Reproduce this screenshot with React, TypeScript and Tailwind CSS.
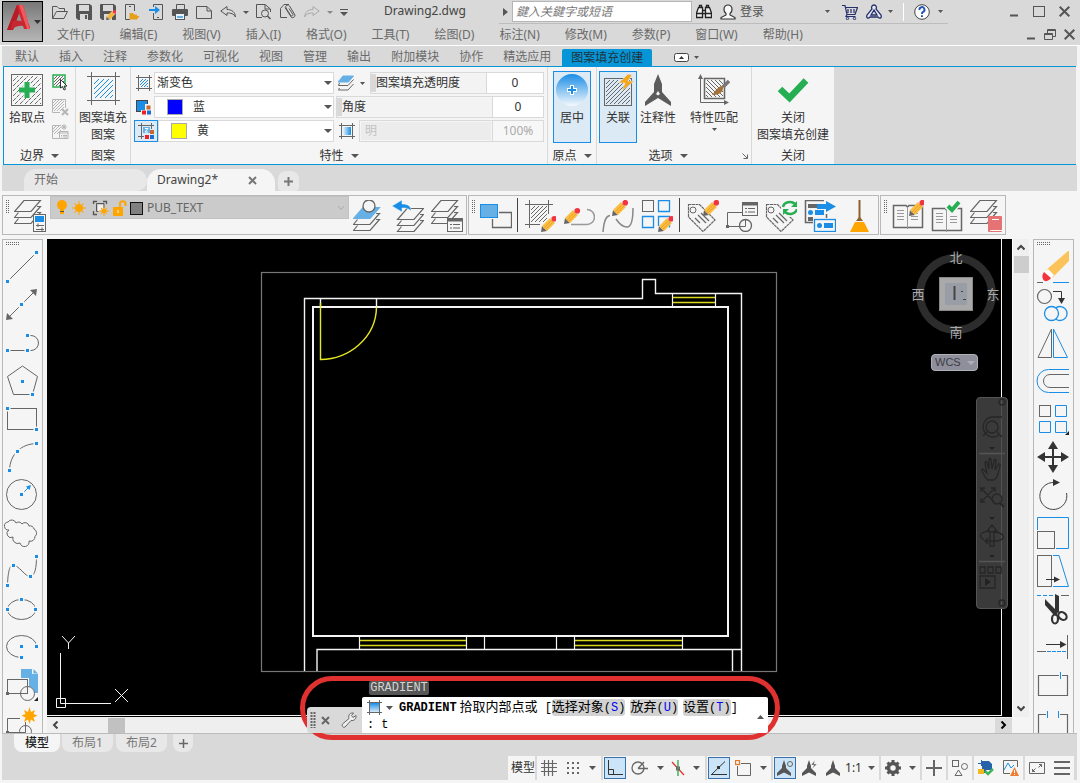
import React from "react";
import type { ReactNode } from "react";

const GRAY = "#666666";
const BLUE = "#1a8ee6";
const SKY = "#67b0e6";

type P = { children?: ReactNode };

function Ico({ w = 16, h = 16, children }: P & { w?: number; h?: number }) {
  return (
    <svg width={w} height={h} viewBox={`0 0 ${w} ${h}`} fill="none" stroke={GRAY} className="shrink-0" aria-hidden="true">
      {children}
    </svg>
  );
}

function Btn({ label, className = "", children }: P & { label: string; className?: string }) {
  return (
    <button type="button" aria-label={label} title={label} className={`flex shrink-0 items-center justify-center ${className}`}>
      {children}
    </button>
  );
}

function Caret({ w = 8, h = 4, color = "#555" }: { w?: number; h?: number; color?: string }) {
  return (
    <Ico w={w} h={h}>
      <path d={`M0 0H${w}L${w / 2} ${h}Z`} fill={color} stroke="none" />
    </Ico>
  );
}

function Hatch({ x, y, s, step = 4, color = GRAY, dash, w = 1, back = false }: { x: number; y: number; s: number; step?: number; color?: string; dash?: string; w?: number; back?: boolean }) {
  const parts: string[] = [];
  for (let k = step; k < 2 * s; k += step) {
    const a = [Math.max(0, k - s), Math.min(k, s)];
    const b = [Math.min(k, s), Math.max(0, k - s)];
    const f = (v: number) => (back ? s - v : v);
    parts.push(`M${x + f(a[0])} ${y + a[1]}L${x + f(b[0])} ${y + b[1]}`);
  }
  return <path d={parts.join("")} stroke={color} strokeDasharray={dash} strokeWidth={w} />;
}

function Dot({ x, y }: { x: number; y: number }) {
  return (
    <>
      <rect x={x - 3} y={y - 3} width={6} height={6} fill="#f5f5f5" stroke="none" />
      <rect x={x - 1.5} y={y - 1.5} width={3} height={3} fill={BLUE} stroke="none" />
    </>
  );
}

function Pencil({ x, y }: { x: number; y: number }) {
  return (
    <g transform={`translate(${x} ${y})`} stroke="none">
      <path d="M0 16L1 10L6 15Z" fill="#666" />
      <path d="M1 10L9 2L14 7L6 15Z" fill="#fbbe45" />
      <path d="M2.800 12.200L11 4M4.500 13.500L12.500 5.500" stroke="#f0a020" />
      <path d="M9 2L10.500 .8L15.200 5.500L14 7Z" fill="#e5e5e5" />
      <circle cx={13.3} cy={2.700} r={2.800} fill="#f5333f" />
    </g>
  );
}

function Layers({ x = 0, y = 0, top = "none" }: { x?: number; y?: number; top?: string }) {
  return (
    <g transform={`translate(${x} ${y})`} strokeWidth={1.2}>
      <path d="M10 .5H26.5L17 11.5H.5Z" fill={top} stroke={top === "none" ? GRAY : top} />
      <path d="M4.500 12.500L.5 17.500H17L26.500 6.500H23M4.500 18.500L.5 23.500H17L26.500 12.500H23" />
    </g>
  );
}

function Grip({ vertical = false }: { vertical?: boolean }) {
  return vertical ? (
    <Ico w={5} h={14}>
      <path d="M1.500 0V14M3.500 0V14" strokeDasharray="1 1" />
    </Ico>
  ) : (
    <Ico w={14} h={4}>
      <path d="M0 .5H14M0 2.500H14" strokeDasharray="1 1" />
    </Ico>
  );
}

/* ---------- title bar ---------- */

const floppy = (
  <>
    <path d="M.5 .5H14L15.500 2V15.500H2L.5 14Z" fill="#555" stroke="#555" />
    <rect x={3} y={1} width={10} height={6} fill="#d9d9d9" stroke="none" />
    <rect x={4} y={10} width={8} height={6} fill="#d9d9d9" stroke="none" />
    <rect x={9} y={11} width={2} height={4} fill="#555" stroke="none" />
  </>
);

const quick: [string, ReactNode][] = [
  ["打开", <Ico><path d="M.5 14.500V2.500H5L7 4.500H12.500V7M.5 14.500L4.500 7.500H15.500L12 14.500Z" stroke="#555" /></Ico>],
  ["保存", <Ico>{floppy}</Ico>],
  ["另存为", <Ico>{floppy}<g transform="translate(6 6) scale(.64)"><Pencil x={0} y={0} /></g></Ico>],
  ["从移动端打开", <Ico><path d="M6 15.500H1.500V.5H10.500V7M5 2.500H7" stroke="#555" /><path d="M5.500 15V9H9L10 10.500H13V12H15.500L13 15.500H5.500Z" fill="#e8a01c" stroke="none" /></Ico>],
  ["保存到移动端", <Ico><path d="M5.500 3V.5H14.500V15.500H5.500V9M9 13.500H11" stroke="#555" fill="none" /><path d="M1 5H7V2L12 6L7 10V7H1Z" fill="#1a8ee6" stroke="none" /></Ico>],
  ["打印", <Ico><path d="M4.500 5V.5H12.500V5" stroke="#555" /><rect x={0} y={5} width={16} height={7} rx={1} fill="#555" stroke="none" /><rect x={3.500} y={9.500} width={9} height={6} fill="#e8f3fb" stroke="#555" /><path d="M5 12H11V14H5Z" fill={SKY} stroke="none" /></Ico>],
  ["新建", <Ico><path d="M.5 2.500H11L15.500 7V14.500H.5ZM11 2.500V7H15.500" stroke="#555" /></Ico>],
  ["放弃", <Ico><path d="M.8 7L7 2.500V5.500C12 5.500 15 8 15.500 13C13.500 9.500 11 9 7 9V11.500Z" stroke="#555" /></Ico>],
];

const menus = ["文件(F)", "编辑(E)", "视图(V)", "插入(I)", "格式(O)", "工具(T)", "绘图(D)", "标注(N)", "修改(M)", "参数(P)", "窗口(W)", "帮助(H)"];

function Header() {
  return (
    <header className="flex h-[46px] shrink-0 border-b border-white bg-[#d9d9d9]">
      <button type="button" aria-label="应用程序" className="mt-[1px] ml-[2px] h-[41px] w-[41px] shrink-0 border border-black bg-gradient-to-b from-[#777] via-[#999] to-[#b5b5b5]">
        <Ico w={39} h={39}>
          <g stroke="none">
            <path d="M4 28L14 3H20L27 27H21L16 11L10 28Z" fill="#d3262f" />
            <path d="M4 28L14 3L16 11L10 28Z" fill="#b81c26" />
            <path d="M9 20C14 17 19 19 26 22L27 27C20 22 14 23 8 28Z" fill="#c42831" />
            <path d="M16 3H20L27 27L24 27Z" fill="#ee5a5f" />
            <path d="M31 18H38L34.500 22Z" fill="#333" />
          </g>
        </Ico>
      </button>
      <div className="min-w-0 flex-1">
        <div className="flex h-[24px]">
          <div className="flex h-[24px] items-center pl-[5px]">
            {quick.map(([l, i]) => (
              <Btn key={l} label={l} className="w-6">{i}</Btn>
            ))}
            <Btn label="放弃列表" className="w-3"><Caret w={6} h={3} /></Btn>
            <Btn label="打印预览" className="w-6">
              <Ico><path d="M6 13.500H.5V.5H9L14.500 5V8M9 .5V5H14" stroke="#555" /><circle cx={9} cy={9.500} r={3.500} stroke="#555" /><path d="M11.500 12L14.500 15" stroke="#555" strokeWidth={1.500} /></Ico>
            </Btn>
            <Btn label="附着" className="w-6">
              <Ico><path d="M7 13.500H.5V4.500L4 .5H9" stroke="#555" /><path d="M5 3.500L11.500 13.500A2.500 2.500 0 0 0 15 11L9.500 2A2 2 0 0 0 6 4L11 12A1.500 1.500 0 0 0 13 10.500L9 4.500" stroke="#555" /></Ico>
            </Btn>
            <Btn label="重做" className="w-6">
              <Ico><path d="M15.200 7L9 2.500V5.500C4 5.500 1 8 .5 13C2.500 9.500 5 9 9 9V11.500Z" stroke="#aaa" /></Ico>
            </Btn>
            <Btn label="重做列表" className="w-3"><Caret w={6} h={3} color="#888" /></Btn>
            <Btn label="自定义" className="w-4">
              <Ico w={8} h={7}><path d="M0 .5H8" stroke="#555" /><path d="M0 3H8L4 7Z" fill="#555" stroke="none" /></Ico>
            </Btn>
          </div>
          <h1 className="ml-[32px] w-[115px] pt-[2px] text-[12px] leading-[18px] text-[#444]">Drawing2.dwg</h1>
          <div className="flex h-[24px] items-center border-b border-[#bdbdbd]">
            <Btn label="展开搜索" className="w-[13px]"><Ico w={5} h={8}><path d="M0 0L5 4L0 8Z" fill="#555" stroke="none" /></Ico></Btn>
            <input aria-label="搜索" placeholder="鍵入关鍵字或短语" className="h-[21px] w-[180px] border border-[#b5b5b5] bg-white px-[3px] text-[12px] text-[#555] italic placeholder:text-[#777]" />
            <Btn label="查找" className="w-6">
              <Ico><path d="M2.500 3.500H6.500V13.500H.5V9ZM13.500 3.500H9.500V13.500H15.500V9ZM6.500 6.500H9.500V9.500H6.500M3.500 3.500V1.500H5.500V3.500M10.500 3.500V1.500H12.500V3.500M.5 9.500H6.500M9.500 9.500H15.500" stroke="#222" strokeWidth={1.300} fill="#eee" /></Ico>
            </Btn>
            <Btn label="登录" className="h-5 gap-1 pl-1 text-[12px] text-[#555]">
              <Ico><path d="M6 9.500V11L1 13.500V15H15V13.500L10 11V9.500A5 5 0 0 0 12 5A4 4 0 0 0 4 5A5 5 0 0 0 6 9.500Z" fill="#f8f8f8" stroke="#333" strokeWidth={1.200} /></Ico>
              登录
            </Btn>
            <Btn label="登录选项" className="ml-[59px] w-2"><Caret w={5} h={3} /></Btn>
            <Btn label="应用商店" className="ml-[9px] w-5">
              <Ico><path d="M0 1.500H3L5 10.500H13L15.500 3.500H4M5 10.500L4 12.500H13.500M6 5V9M9 5V9M12 5V9" stroke="#25306a" strokeWidth={1.200} /><circle cx={5.500} cy={14.500} r={1.200} stroke="#25306a" /><circle cx={12.500} cy={14.500} r={1.200} stroke="#25306a" /></Ico>
            </Btn>
            <Btn label="Autodesk" className="ml-1 w-5">
              <Ico><path d="M8 1C10 1 11 3 10 5L15 11C16 14 14 15 12 13H4C2 15 0 14 1 11L6 5C5 3 6 1 8 1ZM8 6L5 11H11Z" fill="#e4e9f5" stroke="#25306a" strokeWidth={1.300} /></Ico>
            </Btn>
            <Btn label="Autodesk 选项" className="w-3"><Caret w={5} h={3} /></Btn>
            <span className="ml-[7px] h-[18px] w-px bg-white" />
            <Btn label="帮助" className="ml-[8px] w-5">
              <Ico><circle cx={8} cy={8} r={7.300} fill="#fff" stroke="#444" /><path d="M5.500 6A2.500 2.500 0 1 1 8.800 8C8 8.500 8 9 8 10M8 11.300V13" stroke="#2454b8" strokeWidth={2} /></Ico>
            </Btn>
            <Btn label="帮助选项" className="w-4"><Caret w={5} h={3} /></Btn>
          </div>
          <div className="ml-auto flex h-[22px] items-center gap-[14px] pr-[10px]">
            <Btn label="最小化"><Ico w={9} h={11}><path d="M0 9.500H8" strokeWidth={2} stroke="#555" /></Ico></Btn>
            <Btn label="最大化"><Ico w={12} h={11}><rect x={.5} y={.5} width={11} height={10} stroke="#555" /></Ico></Btn>
            <Btn label="关闭"><Ico w={11} h={11}><path d="M.7 .7L10.300 10.300M10.300 .7L.7 10.300" strokeWidth={2} stroke="#555" /></Ico></Btn>
          </div>
        </div>
        <nav className="flex h-[21px] items-center gap-[25px] pr-[5px] pl-[14px] text-[12px] text-[#6a6a6a]">
          {menus.map((m) => (
            <button key={m} type="button" className="whitespace-nowrap">{m}</button>
          ))}
          <div className="ml-auto flex items-center gap-2">
            <Btn label="最小化文档"><Ico w={9} h={11}><path d="M0 9.500H8" strokeWidth={2} stroke="#555" /></Ico></Btn>
            <Btn label="还原文档"><Ico w={12} h={11}><path d="M3.500 4V.5H11.500V7.500H9M.5 4.500H8.500V10.500H.5ZM.5 5.500H8.500M3.500 1.500H11.500" stroke="#555" /></Ico></Btn>
            <Btn label="关闭文档"><Ico w={11} h={11}><path d="M.7 .7L10.300 10.300M10.300 .7L.7 10.300" strokeWidth={2} stroke="#555" /></Ico></Btn>
          </div>
        </nav>
      </div>
    </header>
  );
}

/* ---------- ribbon ---------- */

function Panel({ title, caret, launcher, width, children }: P & { title: string; caret?: boolean; launcher?: boolean; width: string }) {
  return (
    <section className={`flex flex-col border-r border-[#d9d9d9] bg-[#f5f5f5] text-[12px] text-[#333] ${width}`}>
      <div className="flex min-h-0 flex-1">{children}</div>
      <div className="flex h-[17px] items-center">
        <h2 className="flex flex-1 items-center justify-center gap-[7px] text-[12px] leading-[17px]">
          {title}
          {caret && <Caret />}
        </h2>
        {launcher && (
          <Btn label="选项设置" className="w-[12px]">
            <Ico w={6} h={6}><path d="M.5 .5L5 5M5.500 1.500V5.500H1.500" /></Ico>
          </Btn>
        )}
      </div>
    </section>
  );
}

function Frame({ s, children }: P & { s: number }) {
  const a = Math.round(s / 8) + 0.5;
  const b = s - a;
  return (
    <Ico w={s} h={s}>
      <path d={`M${a} 0V${s}M${b} 0V${s}M0 ${a}H${s}M0 ${b}H${s}`} />
      {children}
    </Ico>
  );
}

function Combo({ label, value, color }: { label: string; value: string; color?: string }) {
  return (
    <div className="relative h-[22px] min-w-0 flex-1 border border-[#d9d9d9] bg-white">
      <select aria-label={label} className={`h-full w-full appearance-none bg-transparent text-[12px] leading-[20px] outline-none ${color ? "pl-[38px]" : "pl-[2px]"}`}>
        <option>{value}</option>
      </select>
      {color && (
        <svg className="absolute top-[2px] left-[12px]" width={16} height={16} aria-hidden="true">
          <rect x={.5} y={.5} width={15} height={15} fill={color} stroke="#aaa" />
        </svg>
      )}
      <span className="pointer-events-none absolute top-[8px] right-[1px]"><Caret /></span>
    </div>
  );
}

function Value({ id, label, value, off }: { id: string; label: string; value: string; off?: boolean }) {
  return (
    <div className={`flex h-[22px] min-w-0 flex-1 border border-[#d9d9d9] ${off ? "text-[#aaa]" : ""}`}>
      <label htmlFor={id} className={`flex min-w-0 flex-1 items-center border-[#d9d9d9] whitespace-nowrap ${off ? "m-px bg-[#ececec] pl-[4px] text-[#c2c2c2]" : "my-px border-l-[5px] bg-[#f3f3f3]"}`}>{label}</label>
      <input id={id} defaultValue={value} disabled={off} className={`border-l border-[#d9d9d9] text-center text-[12px] outline-none ${off ? "w-[51px] bg-[#f7f7f7]" : id === "transparency" ? "w-[57px] bg-white" : "w-[51px] bg-white"}`} />
    </div>
  );
}

const bluesq = (
  <>
    <rect x={1.500} y={1.500} width={11} height={11} fill="#1a8ee6" stroke="#444" />
    <path d="M10 5H16V9H14V16H6V11H10Z" fill="#f5f5f5" stroke="none" />
    <rect x={11.500} y={6.500} width={4} height={4} fill="#c8682c" stroke="none" />
    <rect x={7} y={11.500} width={4} height={4} fill="#e22" stroke="none" />
    <rect x={12} y={11.500} width={4} height={4} fill="#1a6fd0" stroke="none" />
  </>
);

const tabs = ["默认", "插入", "注释", "参数化", "可视化", "视图", "管理", "输出", "附加模块", "协作", "精选应用"];

function Ribbon() {
  return (
    <>
      <nav className="flex h-[20px] shrink-0 items-end bg-[#d9d9d9] pl-[3px] text-[12px] text-[#6a6a6a]">
        {tabs.map((t) => (
          <button key={t} type="button" className="h-[18px] px-[10px] leading-[18px] whitespace-nowrap">{t}</button>
        ))}
        <button type="button" className="ml-px h-[17px] rounded-t-[2px] bg-[#0696d7] px-[9px] leading-[17px] text-[#1f3440]">图案填充创建</button>
        <Btn label="功能区显示" className="ml-[22px] h-[17px] gap-[5px]">
          <Ico w={15} h={9}><rect x={.5} y={.5} width={14} height={8} rx={2} fill="#fff" stroke="#444" /><path d="M5 6L7.500 3L10 6Z" fill="#333" stroke="none" /></Ico>
          <Caret w={5} h={3} />
        </Btn>
      </nav>
      <div className="mr-px ml-px flex h-[99px] shrink-0 border-y border-l border-[#0696d7] bg-[#d9d9d9]">
        <Panel title="边界" caret width="w-[72px]">
          <Btn label="拾取点" className="ml-[3px] w-[40px] flex-col justify-start gap-[3px] self-start pt-[7px]">
            <Ico w={32} h={32}>
              <rect x={.5} y={.5} width={31} height={31} />
              <Hatch x={2} y={2} s={28} step={5} dash="4 1" />
              <path d="M16 8V24M8 16H24" stroke="#f5f5f5" strokeWidth={7} />
              <path d="M16 8V24M8 16H24" stroke="#25ae52" strokeWidth={5} />
            </Ico>
            <span className="whitespace-nowrap">拾取点</span>
          </Btn>
          <div className="ml-[5px] flex flex-col gap-2 pt-[7px]">
            <Btn label="选择"><Ico w={17} h={17}><rect x={1} y={1} width={12} height={12} stroke="#25ae52" strokeWidth={1.500} /><Hatch x={2} y={2} s={10} step={3} /><path d="M8.500 5.500V14L10.500 12.500L12 16L13.500 15.300L12 12H15Z" fill="#fff" stroke="#333" /></Ico></Btn>
            <Btn label="删除"><Ico w={17} h={17}><path d="M8 13.500H.5V.5H13.500V9" stroke="#b5b5b5" /><Hatch x={1} y={1} s={11} step={3} color="#b5b5b5" /><path d="M10 10L16 16M16 10L10 16" stroke="#b5b5b5" strokeWidth={2} /></Ico></Btn>
            <Btn label="重新创建"><Ico w={17} h={17}><path d="M7 14.500H.5V1.500H9" stroke="#b5b5b5" /><Hatch x={1} y={2} s={8} step={3} color="#b5b5b5" /><path d="M12 0V6M9 3H15M10 1L14 5M14 1L10 5" stroke="#b5b5b5" /><path d="M7.500 7.500H16V14.500H7.500ZM7.500 9H16M9 11.500H10M11 11.500H15M9 13H10M11 13H15" stroke="#b5b5b5" fill="#f5f5f5" /></Ico></Btn>
          </div>
        </Panel>
        <Panel title="图案" width="w-[55px]">
          <button type="button" className="flex w-full flex-col items-center pt-[5px] leading-[17px] whitespace-nowrap">
            <Frame s={33}><Hatch x={7} y={7} s={19} step={5} color={BLUE} /></Frame>
            <span className="mt-[4px]">图案填充</span>
            <span>图案</span>
          </button>
        </Panel>
        <Panel title="特性" caret width="w-[417px]">
          <div className="flex w-[203px] shrink-0 flex-col gap-[2px] pt-[5px] pl-[3px]">
            <div className="flex items-center gap-px">
              <span className="flex w-[19px] justify-center"><Frame s={16}><Hatch x={4} y={4} s={8} step={3} color={BLUE} /></Frame></span>
              <Combo label="图案类型" value="渐变色" />
            </div>
            <div className="flex items-center gap-px">
              <span className="flex w-[19px] justify-center"><Ico w={17} h={17}>{bluesq}</Ico></span>
              <Combo label="渐变色 1" value="蓝" color="#0000ff" />
            </div>
            <div className="flex items-center">
              <Btn label="启用双色" className="h-[22px] w-[24px] border border-[#1a8ee6] bg-[#dceaf5]">
                <Ico w={17} h={17}><path d="M3.500 0V16M13.500 0V6M0 2.500H16M0 13.500H6" /><rect x={5} y={4} width={7} height={6} fill={SKY} stroke="none" /><path d="M7 5.500H10L7 9H10" stroke="#fff" /><path d="M12 7H16V11H12Z" fill="#c8682c" stroke="none" /><path d="M7 12H11V16H7Z" fill="#e22" stroke="none" /><path d="M12 12H16V16H12Z" fill="#1a6fd0" stroke="none" /></Ico>
              </Btn>
              <Combo label="渐变色 2" value="黄" color="#ffff00" />
            </div>
          </div>
          <div className="flex min-w-0 flex-1 flex-col gap-[2px] pt-[5px] pr-[3px] pl-[2px]">
            <div className="flex items-center">
              <Btn label="图层" className="ml-[2px] gap-[6px] pr-[5px]">
                <Ico w={16} h={16}><path d="M5 1H15.500L10.500 7H0Z" fill={SKY} stroke={SKY} /><path d="M1.500 8L.5 10.500H10L15.500 4.500M1.500 13L.5 15H10L15.500 9" /></Ico>
                <Caret w={5} h={3} />
              </Btn>
              <Value id="transparency" label="图案填充透明度" value="0" />
            </div>
            <div className="flex items-center">
              <Value id="angle" label="角度" value="0" />
            </div>
            <div className="flex items-center">
              <Btn label="居中渐变" className="mr-[4px] ml-[3px]"><Frame s={16}><defs><linearGradient id="cg"><stop stopColor="#e6f2fb" /><stop offset="1" stopColor={BLUE} /></linearGradient></defs><rect x={4} y={4} width={8} height={8} fill="url(#cg)" stroke="none" /></Frame></Btn>
              <Value id="tint" label="明" value="100%" off />
            </div>
          </div>
        </Panel>
        <Panel title="原点" caret width="w-[49px]">
          <button type="button" className="mt-[4px] ml-[5px] flex h-[72px] w-[38px] flex-col items-center gap-[3px] border border-[#1a8ee6] bg-[#dceaf5] pt-[2px]">
            <Ico w={32} h={32}>
              <defs><linearGradient id="og" x2="0" y2="1"><stop stopColor={BLUE} /><stop offset="1" stopColor="#f5f9fd" /></linearGradient></defs>
              <circle cx={16} cy={16} r={16} fill="url(#og)" stroke="none" />
              <path d="M16 11V21M11 16H21" stroke="#fff" strokeWidth={4} /><path d="M16 12V20M12 16H20" stroke={BLUE} strokeWidth={2} />
            </Ico>
            <span>居中</span>
          </button>
        </Panel>
        <Panel title="选项" caret launcher width="w-[155px]">
          <div className="flex flex-1 pl-[2px]">
            <button type="button" className="mt-[4px] flex h-[72px] w-[38px] flex-col items-center gap-[3px] border border-[#1a8ee6] bg-[#dceaf5] pt-[2px]">
              <Ico w={32} h={32}><rect x={2.500} y={4.500} width={27} height={27} /><Hatch x={4} y={6} s={24} step={4} /><path d="M26 0L17 9H23L20 17L32 7H26L30 1Z" fill="#f9a51a" stroke="#dceaf5" strokeWidth={.6} /></Ico>
              <span>关联</span>
            </button>
            <button type="button" className="flex w-[42px] flex-col items-center gap-[3px] self-start pt-[7px] whitespace-nowrap">
              <Ico w={32} h={32}><path d="M16 0L20 10V18L29 28V32L16 24L3 32V28L12 18V10Z" fill="#5c5c5c" stroke="none" /><path d="M14 20L16 17L18 20L16 21.500Z" fill="#f5f5f5" stroke="none" /></Ico>
              <span>注释性</span>
            </button>
            <button type="button" className="flex w-[70px] flex-col items-center self-start pt-[7px] whitespace-nowrap">
              <Ico w={32} h={32}><path d="M2.500 28.500V3M2.500 28.500H28" /><path d="M0 5L2.500 0L5 5ZM26 26L31 28.500L26 31Z" fill={GRAY} stroke="none" /><rect x={6.500} y={4.500} width={20} height={20} strokeWidth={1.500} /><Hatch x={8} y={6} s={17} step={4} back /><path d="M31 7L25 13" stroke="#777" strokeWidth={3.500} /><path d="M25 12C21 11 17 17 14 21C19 21 26 20 25 12Z" fill="#a5713a" stroke="none" /></Ico>
              <span className="mt-[3px]">特性匹配</span>
              <span className="mt-px"><Caret w={5} h={3} /></span>
            </button>
          </div>
        </Panel>
        <Panel title="关闭" width="w-[83px]">
          <button type="button" className="flex w-full flex-col items-center pt-[7px] leading-[17px] whitespace-nowrap">
            <Ico w={32} h={32}><path d="M3 15L12.500 24L29 6.500" stroke="#25ae52" strokeWidth={6.500} /></Ico>
            <span className="mt-[3px]">关闭</span>
            <span>图案填充创建</span>
          </button>
        </Panel>
      </div>
    </>
  );
}

function DocTabs() {
  return (
    <div className="flex h-[26px] shrink-0 items-end bg-[#d9d9d9] pl-[22px] text-[12px]">
      <button type="button" className="h-[22px] w-[123px] rounded-t-[12px] rounded-br-[10px] bg-[#e8e8e8] pl-[10px] text-left text-[#6a6a6a]">开始</button>
      <div className="flex h-[22px] w-[128px] items-center justify-between rounded-t-[14px] bg-[#f5f5f5] pr-[18px] pl-[10px]">
        <button type="button" className="text-[#444]">Drawing2*</button>
        <Btn label="关闭标签"><Ico w={9} h={9}><path d="M1 1L8 8M8 1L1 8" strokeWidth={2} stroke="#777" /></Ico></Btn>
      </div>
      <Btn label="新标签" className="ml-[3px] h-[20px] w-[21px] rounded-t-[8px] rounded-b-[4px] bg-[#e8e8e8]"><Ico w={9} h={9}><path d="M4.500 0V9M0 4.500H9" strokeWidth={2} stroke="#777" /></Ico></Btn>
    </div>
  );
}

/* ---------- toolbars ---------- */

const tag = <path d="M1.500 4.500H12.500L28 20L16 31.500L1.500 17Z" strokeDasharray="3 .5" strokeWidth={1.200} />;
const tagInner = <><circle cx={6} cy={10} r={3} /><path d="M8 18L13 23M11 15L19 23M14 13L22 21" strokeWidth={1.200} /></>;
const sheet = (x: number, y: number, s = 0) => (
  <g transform={`translate(${x} ${y})`}><rect x={.5} y={.5} width={15} height={13 - s} fill="#f5f5f5" /><path d="M0 2H16" strokeWidth={3} /><path d="M3 6.500H5M3 10H5M6 6.500H13M6 10H13" /></g>
);
const book = <><path d="M.5 6.500H13L14.500 8L16 6.500H29.500V28.500H.5Z" strokeWidth={1.500} /><path d="M14.500 8V30M4 11.500H11M4 14.500H11M4 17.500H11M4 20.500H11M18 14.500H25M18 17.500H25M18 20.500H25" stroke="#999" /></>;

const tools2: [string, ReactNode][] = [
  ["编辑图案填充", <><path d="M5.500 0V28M24.500 0V14M1 4.500H29M1 24.500H16" /><Hatch x={7} y={6} s={16} step={4} /><Pencil x={17} y={16} /></>],
  ["编辑多段线", <><path d="M8 24.500H24A7.500 7.500 0 0 0 24 9.500H25" strokeWidth={1.500} stroke="#999" /><Pencil x={1} y={8} /></>],
  ["编辑样条曲线", <><path d="M1 32C2 20 4 16 8 15.500M14 19C18 25 21 27 25 27C29 27 31 20 31 8" strokeWidth={1.500} stroke="#888" /><Pencil x={10} y={0} /></>],
  ["编辑阵列", <><rect x={1.500} y={.5} width={11} height={11} /><path d="M17.500 .5H28.500V11.500H17.500ZM1.500 16.500H12.500V27.500H1.500ZM17.500 26V16.500H28.500V27.500" stroke={BLUE} strokeWidth={1.300} /><Pencil x={17} y={16} /></>],
];
const tools3: [string, ReactNode][] = [
  ["编辑属性", <>{tag}{tagInner}<Pencil x={16} y={0} /></>],
  ["块属性", <>{sheet(16, 2)}<path d="M16 12.500H1.500V26.500H19.500V19" /><rect x={0} y={25} width={3} height={3} fill={GRAY} stroke="none" /><circle cx={19.500} cy={25.500} r={6} strokeWidth={1.300} /></>],
  ["同步属性", <>{tag}{tagInner}<circle cx={25} cy={8} r={9} fill="#f5f5f5" stroke="none" /><path d="M18 7A7 6 0 0 1 30 4M32 9A7 6 0 0 1 20 12" stroke="#25ae52" strokeWidth={2.500} /><path d="M32 1V7H26ZM18 15V9H24Z" fill="#25ae52" stroke="none" /></>],
  ["数据提取", <><path d="M20 .5H1.500V22.500H9M22.500 14V18" strokeWidth={1.500} /><path d="M4 4H13V8H4ZM4 17H9V21H4Z" fill={GRAY} stroke="none" /><path d="M13 4H22V1L32 6.500L22 12V9H13ZM11 10H20V15H11Z" fill={BLUE} stroke="none" /><circle cx={6.500} cy={12.500} r={2.500} fill={BLUE} stroke="none" /><rect x={10.500} y={19.500} width={21} height={12} fill="#f5f5f5" stroke={BLUE} strokeWidth={1.300} /><circle cx={15.500} cy={25.500} r={2.500} fill={BLUE} stroke="none" /><path d="M20 23H29V28H20Z" fill={BLUE} stroke="none" /></>],
  ["清理", <><path d="M16.500 0V19" stroke="#8d6030" strokeWidth={2} /><path d="M13 21L16 17H17L20 21Z" fill="#8d6030" stroke="none" /><path d="M12 22H21L26 32H7Z" fill="#ffa500" stroke="none" /></>],
];

function ToolCells({ items }: { items: [string, ReactNode][] }) {
  return (
    <>
      {items.map(([l, i]) => (
        <Btn key={l} label={l} className="h-[36px] w-[39px]"><Ico w={32} h={32}>{i}</Ico></Btn>
      ))}
    </>
  );
}

function TopToolbars() {
  const box = "flex h-[40px] border border-[#b9b9b9] pt-[2px]";
  return (
    <div className="flex h-[48px] shrink-0 gap-px pt-[4px]">
      <div className={`${box} w-[465px]`}>
        <span className="pt-[2px] pl-[2px]"><Grip vertical /></span>
        <Btn label="图层特性" className="mr-[2px] ml-px h-[36px] w-[37px]">
          <Ico w={32} h={32}><Layers y={0} /><rect x={19.500} y={14.500} width={12} height={17} fill="#f5f5f5" /><rect x={21} y={16} width={9} height={6} fill={BLUE} stroke="none" /><path d="M22 25.500H30M22 29.500H30M24 23.500V27M28 27.500V31" /></Ico>
        </Btn>
        <div className="relative -mt-[2px] h-[23px] min-w-0 flex-1 border border-[#c2c2c2] bg-[#cbcbcb]">
          <select aria-label="图层" className="block h-[21px] w-full appearance-none bg-transparent pl-[96px] text-[12px] leading-[21px] text-[#666] outline-none"><option>PUB_TEXT</option></select>
          <svg className="pointer-events-none absolute top-[2px] left-[5px]" width={90} height={18} fill="none" aria-hidden="true">
            <circle cx={6} cy={6} r={5} fill="#ffa500" /><path d="M4 10H8V15H4Z" fill="#ffa500" /><path d="M4 12.500H8" stroke="#555" />
            <circle cx={23} cy={9} r={4} fill="#ffa500" /><path d="M23 2V16M16 9H30M18 4L28 14M28 4L18 14" stroke="#ffa500" />
            <path d="M37.500 5V2.500H41M47 2.500H50.500V5M37.500 12V15.500H41" stroke="#555" strokeWidth={1.300} /><path d="M40.500 4.500H48V9M40.500 4.500V12.500H43" stroke="#555" /><path d="M42 6H47V9L43 12.500H42Z" fill="#f0f0f0" /><circle cx={48} cy={12} r={2.500} fill="#ffa500" /><path d="M48 7V17M43 12H53M45 9L51 15M51 9L45 15" stroke="#ffa500" />
            <rect x={57} y={8} width={10} height={9} fill="#ffa500" /><path d="M64 8V4A3 3 0 0 1 69.500 4V7" stroke="#ffa500" strokeWidth={2} /><path d="M62 11V14" stroke="#fff" />
            <rect x={74.500} y={3.500} width={12} height={12} fill="#808080" stroke="#111" />
          </svg>
          <svg className="pointer-events-none absolute top-[8px] right-[3px]" width={8} height={6} fill="none" aria-hidden="true"><path d="M1 1L4 4.500L7 1" stroke="#aaa" /></svg>
        </div>
        <div className="flex w-[117px] items-start">
          <Btn label="置为当前" className="h-[36px] w-[39px]"><Ico w={32} h={32}><Layers x={0} y={7} top={SKY} /><circle cx={16} cy={6} r={6} fill="#f5f5f5" strokeWidth={1.300} /></Ico></Btn>
          <Btn label="上一个图层" className="h-[36px] w-[39px]"><Ico w={32} h={32}><Layers x={5} y={8} /><path d="M0 6L10 0V4C16 4 19 6 19 11C16 8 14 8 10 8V12Z" fill={BLUE} stroke="#f5f5f5" strokeWidth={.5} /></Ico></Btn>
          <Btn label="图层状态" className="h-[36px] w-[39px]"><Ico w={32} h={32}><Layers />{sheet(16, 18)}</Ico></Btn>
        </div>
      </div>
      <div className={`${box} w-[411px]`}>
        <span className="pt-[2px] pl-[2px]"><Grip vertical /></span>
        <Btn label="绘图次序" className="h-[36px] w-[39px]"><Ico w={32} h={32}><path d="M12.500 19V27.500H31.500V12.500H19" strokeWidth={1.300} /><rect x={.5} y={4.500} width={17} height={13} fill={SKY} stroke={BLUE} /></Ico></Btn>
        <span className="mx-[2px] h-[34px] w-px bg-[#444]" />
        <ToolCells items={tools2} />
        <span className="mx-[3px] h-[34px] w-px bg-[#444]" />
        <ToolCells items={tools3} />
      </div>
      <div className={`${box} w-[126px]`}>
        <span className="pt-[2px] pl-[2px]"><Grip vertical /></span>
        <ToolCells
          items={[
            ["块编辑器", <><g transform="translate(1 -1)">{book}</g><Pencil x={17} y={0} /></>],
            ["检查标准", <><g transform="translate(1 2)">{book}</g><path d="M16 6L21 11L29 1" stroke="#f5f5f5" strokeWidth={6} /><path d="M17 6L21 10L28 2" stroke="#25ae52" strokeWidth={4} /></>],
            ["图层转换", <><Layers /><rect x={18} y={16} width={14} height={16} rx={1} fill="#e57373" stroke="none" /><path d="M20 30.500H32M22 19.500H29" stroke="#fff" /></>],
          ]}
        />
      </div>
    </div>
  );
}

const draw: [string, ReactNode][] = [
  ["直线", <><path d="M4.500 33.500L33.500 4.500" /><Dot x={4.500} y={33.500} /><Dot x={33.500} y={4.500} /></>],
  ["构造线", <><path d="M6 31L31 6" /><path d="M3 34L4 27L10 33ZM34 3L27 4L33 10Z" fill={GRAY} stroke="none" /><Dot x={18.500} y={18.500} /></>],
  ["多段线", <><path d="M4.500 26.500H24.500M24.500 11.500H28A7.500 7.500 0 0 1 28 26.500H24.500" /><Dot x={4.500} y={26.500} /><Dot x={24.500} y={26.500} /><Dot x={24.500} y={11.500} /></>],
  ["多边形", <><path d="M19.500 4L34.500 14.500L29.500 32.500H10.500L4.500 14.500Z" /><Dot x={19.500} y={19.500} /><Dot x={29.500} y={32.500} /></>],
  ["矩形", <><rect x={4.500} y={8.500} width={29} height={21} /><Dot x={4.500} y={8.500} /><Dot x={33.500} y={29.500} /></>],
  ["圆弧", <><path d="M6.500 32.500C7 16 18 6 33.500 5.500" /><Dot x={6.500} y={32.500} /><Dot x={14.500} y={13.500} /><Dot x={33.500} y={5.500} /></>],
  ["圆", <><circle cx={18.500} cy={18.500} r={15} /><path d="M18.500 18.500L26 11" stroke={BLUE} /><path d="M28 9L23 10.500L26.500 14Z" fill={BLUE} stroke="none" /><Dot x={18.500} y={18.500} /></>],
  ["修订云线", <path d="M6 16A4 4 0 0 1 5 8A4.500 4.500 0 0 1 13 9A4 4 0 0 1 19 10A4 4 0 0 1 26 12A4 4 0 0 1 31 15A4.500 4.500 0 0 1 32 22.500A4.500 4.500 0 0 1 26 27A4.500 4.500 0 0 1 17 29A5 5 0 0 1 10 23A4 4 0 0 1 6 16Z" />],
  ["样条曲线", <><path d="M4.500 33.500C5 15 8 13 10.500 13.500C16 13 22 25 27.500 24.500C32 24 33.500 15 33.500 4.500" /><Dot x={4.500} y={33.500} /><Dot x={10.500} y={13.500} /><Dot x={27.500} y={24.500} /><Dot x={33.500} y={4.500} /></>],
  ["椭圆", <><ellipse cx={18.500} cy={19.500} rx={14} ry={10} /><Dot x={4.500} y={19.500} /><Dot x={18.500} y={9.500} /><Dot x={32.500} y={19.500} /></>],
  ["椭圆弧", <><path d="M18.500 29.500A15 11 0 1 1 33.500 18.500" /><Dot x={18.500} y={18.500} /><Dot x={33.500} y={18.500} /><Dot x={18.500} y={29.500} /></>],
  ["插入块", <><path d="M18 3H29V8H35V27H31.500A7 7 0 0 0 26 20.500V12H18Z" fill={SKY} stroke="none" /><path d="M30.500 3L35 7.500H30.500Z" fill={SKY} stroke="none" /><rect x={4.500} y={13.500} width={20} height={14} /><rect x={3} y={26} width={3} height={3} fill={GRAY} stroke="none" /><circle cx={24.500} cy={27.500} r={7} /><path d="M35 31V35H31Z" fill="#222" stroke="none" /></>],
  ["创建块", <><path d="M17 14.500H4.500V28.500H22.500V18" /><circle cx={22.500} cy={27.500} r={6} /><rect x={3} y={27} width={3} height={3} fill={GRAY} stroke="none" /><path d="M26.500 3L28 8L32 6L30.500 10L34.500 11.500L30.500 13.500L32 18L28 15.500L26.500 20L25 15.500L21 18L22.500 13.500L18.500 11.500L22.500 10L21 6L25 8Z" fill="#ffa500" stroke="none" /></>],
];

const modify: [string, ReactNode][] = [
  ["删除", <><path d="M35 3V13L18 30L11 23L34 3Z" fill="#fcc35a" stroke="none" /><path d="M14 21L20 27L17 31L10 24Z" fill="#fff" stroke="none" /><path d="M10 24L17 30C14 34 10 34 9 31C8 29 8 27 10 24Z" fill="#f5333f" stroke="none" /><path d="M3 34.500H9" /><path d="M19 34.500H35" stroke={BLUE} /></>],
  ["复制", <><circle cx={10.500} cy={10.500} r={7} strokeWidth={1.200} /><path d="M19 5.500H27.500V13" stroke="#333" /><path d="M24 12H31L27.500 18Z" fill="#333" stroke="none" /><path d="M22 21.800A7 7 0 1 1 22 33.200" stroke={BLUE} strokeWidth={1.300} /><circle cx={17.500} cy={27.500} r={7} stroke={BLUE} strokeWidth={1.300} /></>],
  ["镜像", <><path d="M17.500 5V33.500H4Z" /><path d="M19.500 5V33.500H33.500Z" stroke={BLUE} /></>],
  ["偏移", <><path d="M35 7.500H14.500A11.500 11.500 0 0 0 14.500 30.500H35" stroke={BLUE} /><path d="M35 12.500H16A6.500 6.500 0 0 0 16 25.500H35" /></>],
  ["阵列", <><rect x={5.500} y={5.500} width={11} height={11} /><path d="M21.500 5.500H32.500V16.500H21.500ZM5.500 21.500H16.500V32.500H5.500ZM21.500 21.500H32.500V32.500H21.500Z" stroke={BLUE} /><path d="M35 31V35H31Z" fill="#222" stroke="none" /></>],
  ["移动", <><path d="M19 8V30M8 19H30" stroke="#333" strokeWidth={2} /><path d="M19 3L24 11H14ZM19 35L24 27H14ZM3 19L11 14V24ZM35 19L27 14V24Z" fill="#333" stroke="none" /></>],
  ["旋转", <><path d="M20 6.500A13.500 13.500 0 1 0 32.500 17" stroke="#444" /><path d="M19 3L26 6.500L19 10Z" fill="#333" stroke="none" /></>],
  ["缩放", <><path d="M3.500 16V3.500H34.500V34.500H22" stroke={BLUE} /><rect x={3.500} y={17.500} width={17} height={17} /></>],
  ["拉伸", <><rect x={3.500} y={3.500} width={14} height={31} /><path d="M19 3.500H25L34.500 34.500H19" stroke={BLUE} /><path d="M12 27.500H22" stroke="#333" /><path d="M20 24.500L26 27.500L20 30.500Z" fill="#333" stroke="none" /></>],
  ["修剪", <><path d="M3 5.500H19" stroke={BLUE} strokeDasharray="4 2" /><path d="M27 5.500H35" /><path d="M21 4L25 6V22L21 24ZM11 9L24 22L22 26L19 24L11 15Z" fill="#333" stroke="none" /><ellipse cx={21} cy={29} rx={3} ry={4.500} stroke="#333" strokeWidth={2.200} /><ellipse cx={28.500} cy={26} rx={4.500} ry={3.500} transform="rotate(40 28.500 26)" stroke="#333" strokeWidth={2.200} /></>],
  ["延伸", <><path d="M12 16.500H28" stroke="#333" /><path d="M26 13L32.500 16.500L26 20Z" fill="#333" stroke="none" /><path d="M3 23.500H12M33.500 7V31" /><path d="M13 23.500H32" stroke={BLUE} strokeDasharray="4 1" /></>],
  ["打断于点", <><path d="M25 9.500H4.500V29.500H33.500V9.500H28" strokeWidth={1.200} /><path d="M26.500 6V13" stroke={BLUE} /></>],
  ["打断", <><path d="M12 10.500H4.500V33M26 10.500H33.500V33" strokeWidth={1.200} /><path d="M13.500 7V14M24.500 7V14" stroke={BLUE} /></>],
];

function SideBar({ items }: { items: [string, ReactNode][] }) {
  return (
    <div className="flex w-[41px] shrink-0 flex-col items-start overflow-hidden border-x border-t border-[#b9b9b9] bg-[#f5f5f5]">
      <span className="flex h-[8px] shrink-0 items-start pt-[2px] pl-[3px]"><Grip /></span>
      {items.map(([l, i]) => (
        <Btn key={l} label={l} className="h-[38px] w-[38px]"><Ico w={38} h={38}>{i}</Ico></Btn>
      ))}
    </div>
  );
}

/* ---------- drawing area ---------- */

function Drawing() {
  return (
    <svg viewBox="47 239 965 477" width={965} height={477} className="block shrink-0 font-['Noto_Sans_CJK_SC',sans-serif]" fill="none" stroke="#f4f4f4" role="img" aria-label="Drawing2">
      <rect x={261.500} y={272.500} width={515} height={399} stroke="#777" strokeWidth={1.200} />
      <path d="M304.500 671V298.500H642.500V279.500H655.500V293.500H741.500V671M317 671V649.500H741.500M732.500 649V671M320.500 298V307M376.500 298V307" strokeWidth={1.400} />
      <path d="M313 307H728V636H313Z" strokeWidth={2} />
      <path d="M359.500 636V649M466.500 636V649M484.500 636V649M556.500 636V649M574.500 636V649M682.500 636V649M672.500 294V307M715.500 294V307" strokeWidth={1.200} />
      <path d="M360 640.500H466M360 645.500H466M575 640.500H682M575 645.500H682M673 297.500H715M673 302.500H715" stroke="#d8d81a" strokeWidth={1.500} />
      <path d="M320.500 303V359.500C349 359 376 338 376.500 307" stroke="#e8e820" strokeWidth={1.400} />
      <path d="M1001.500 239V716M47 715.500H1001" />
      <path d="M60.500 653V703.500H111M56.500 698.500H65.500V707.500H56.500ZM115 689L128 702M128 689L115 702M62 636L68.500 643L75 636M68.500 643V649" />
      <circle cx={956} cy={294} r={36} stroke="#2c2c2c" strokeWidth={8} />
      <rect x={939.500} y={277.500} width={33} height={33} fill="#a9a9a9" stroke="#888" />
      <rect x={945} y={283} width={22} height={22} fill="#999da5" stroke="none" />
      <path d="M954.500 286V300" stroke="#444" strokeWidth={2} /><path d="M961 291.500H963M963 299.500H966" stroke="#444" />
      <g fill="#aaa" stroke="none" fontSize={13} textAnchor="middle">
        <text x={956} y={262}>北</text>
        <text x={956} y={337}>南</text>
        <text x={918} y={299}>西</text>
        <text x={993} y={299}>东</text>
      </g>
    </svg>
  );
}

function NavBar() {
  return (
    <div className="absolute top-[158px] right-[21px] h-[212px] w-[32px] rounded-[4px] border border-[#555] bg-[#404040]/90">
      <svg width={30} height={210} fill="none" stroke="#262626" strokeWidth={1.300} aria-hidden="true">
        <circle cx={25} cy={4} r={3} /><path d="M25 19H15A10 10 0 1 0 22 37" /><circle cx={15} cy={29} r={6} /><path d="M10 34L6 38M20 34L25 39" />
        <path d="M12 49H18L15 52ZM12 119H18L15 122ZM12 157H18L15 160Z" fill="#222" stroke="none" />
        <path d="M2 55.500H28M2 163.500H28" stroke="#555" />
        <path d="M8 79L5 73C4 71 6 70 7 72L10 75L8 65C8 63 10 63 10 65L12 71V62C12 60 14 60 14 62L15 71L17 63C17 61 19 61 19 63L18 72L21 67C22 65 24 66 23 68L20 79L17 82H11Z" />
        <path d="M4 90L17 104M18 90L4 104M4 94V90H8M14 90H18V94M4 100V104H8" /><circle cx={20} cy={101} r={5} /><path d="M23 105L27 109" strokeWidth={2} />
        <path d="M13 148V133H10L15 127L20 133H17V148ZM7 142C-2 136 8 132 15 134C27 134 31 141 20 143L8 143M11 140L8 143L11 146" />
        <path d="M3 169H8V175H3ZM11 169H16V175H11ZM19 169H24V175H19ZM3 178H18V190H3Z" /><path d="M8 180L14 184L8 188Z" fill="#222" stroke="none" />
        <circle cx={25} cy={205} r={3} />
      </svg>
    </div>
  );
}

function Key({ text, k }: { text: string; k: string }) {
  return (
    <button type="button" className="h-[17px] rounded-[3px] bg-[#d2d2d2] leading-[17px]">
      <span className="text-[13px]">{text}</span>(<span className="text-[#0000ee]">{k}</span>)
    </button>
  );
}

function CommandLine() {
  return (
    <div className="absolute top-[437px] left-[253px] h-[64px] w-[480px] rounded-[32px] border-[5px] border-[#e03131] font-['Liberation_Mono','Noto_Sans_CJK_SC',monospace] text-[12px] text-black">
      <span className="ml-[64px] inline-block h-[14px] w-[60px] rounded-[2px] bg-[#565656] text-center align-top leading-[14px] text-[#d5d5d5]">GRADIENT</span>
      <div className="-mt-[2px] ml-[2px] flex items-end">
        <div className="flex h-[26px] w-[55px] items-center rounded-l-[4px] bg-[#d9d9d9] pl-[3px]">
          <Ico w={6} h={16}><path d="M1.500 0V16M4.500 0V16" strokeDasharray="2 1" strokeWidth={2} /></Ico>
          <Btn label="关闭命令行" className="ml-[5px]"><Ico w={9} h={9}><path d="M1 1L8 8M8 1L1 8" strokeWidth={2} /></Ico></Btn>
          <Btn label="自定义命令行" className="ml-[11px]"><Ico w={16} h={16}><path d="M1.500 12L8 6.500C7 3 9 .5 12.500 1L10.500 3.500L12 5.500L15 3.500C15.500 7 13 9 10 8.500L4 15C2 16 .5 14 1.500 12Z" fill="#eee" /></Ico></Btn>
        </div>
        <div className="relative h-[36px] w-[406px] rounded-[2px] bg-white pl-[5px]">
          <div className="flex h-[21px] items-center whitespace-nowrap">
            <Frame s={15}><defs><linearGradient id="cm" x2="0" y2="1"><stop stopColor={BLUE} /><stop offset="1" stopColor="#d6eaf8" /></linearGradient></defs><rect x={3} y={3} width={9} height={9} fill="url(#cm)" stroke="none" /></Frame>
            <Btn label="最近命令" className="ml-[4px]"><Caret w={7} /></Btn>
            <b className="ml-[6px]">GRADIENT</b>
            <span className="ml-[3px] text-[13px]">拾取内部点或</span>
            <span className="ml-[7px]">[</span>
            <span className="flex gap-[5px]"><Key text="选择对象" k="S" /><Key text="放弃" k="U" /><Key text="设置" k="T" /></span>
            <span>]</span>
          </div>
          <label className="flex h-[14px] items-center gap-[7px]">:<input aria-label="命令" defaultValue="t" className="h-[14px] w-[200px] outline-none" /></label>
          <span className="absolute right-[4px] bottom-[14px]"><Ico w={7} h={4}><path d="M0 4H7L3.500 0Z" fill="#555" stroke="none" /></Ico></span>
        </div>
      </div>
    </div>
  );
}

function Workspace() {
  return (
    <main className="flex min-h-0 flex-1">
      <SideBar items={draw} />
      <div className="relative ml-[4px] flex min-w-0 flex-1 flex-col">
        <div className="flex min-h-0 flex-1">
          <div className="flex min-w-0 flex-1 flex-col overflow-hidden border-r border-white bg-black"><Drawing /></div>
          <div className="flex w-[16px] flex-col items-center bg-[#efefef]">
            <Btn label="向上" className="h-[17px]"><Ico w={8} h={7}><path d="M.5 5.500L4 2L7.500 5.500" stroke="#444" strokeWidth={2} /></Ico></Btn>
            <span className="h-[17px] w-[15px] bg-[#cdcdcd]" />
            <Btn label="向下" className="mt-auto h-[17px]"><Ico w={8} h={7}><path d="M.5 1.500L4 5L7.500 1.500" stroke="#444" strokeWidth={2} /></Ico></Btn>
          </div>
        </div>
        <div className="mr-[17px] flex h-[16px] shrink-0 items-center bg-[#efefef]">
          <Btn label="向左" className="w-[17px]"><Ico w={7} h={8}><path d="M5.500 .5L2 4L5.500 7.500" stroke="#444" strokeWidth={2} /></Ico></Btn>
          <span className="ml-[44px] h-[15px] w-[17px] bg-[#c1c1c1]" />
          <Btn label="向右" className="ml-auto h-[15px] w-[17px] bg-[#dadada]"><Ico w={7} h={8}><path d="M1.500 .5L5 4L1.500 7.500" stroke="#000" strokeWidth={2} /></Ico></Btn>
        </div>
        <button type="button" className="absolute top-[115px] right-[51px] flex h-[17px] w-[47px] items-center gap-[6px] rounded-[4px] border border-[#b0b0bc] bg-[#8f8f9c] pl-[3px] font-['Liberation_Sans',sans-serif] text-[11px] text-[#3c3c44]">
          WCS<Caret w={8} h={4} color="#aeaebb" />
        </button>
        <NavBar />
        <CommandLine />
      </div>
      <div className="ml-[4px] mr-[3px] flex"><SideBar items={modify} /></div>
    </main>
  );
}

/* ---------- footer ---------- */

const g = "flex h-[24px] items-center bg-[#f5f5f5]";
const on = "h-[22px] w-[22px] border border-[#3b6ea5] bg-[#cce4f7]";
const person = <path d="M8 0L10 6V8L15 13V16L8 12.500L1 16V13L6 8V6Z" fill="#555" stroke="none" />;

function StatusCaret() {
  return <Btn label="更多" className="w-[16px]"><Caret w={7} h={4} /></Btn>;
}

function Footer() {
  return (
    <footer className="relative -z-10 mb-[3px] shrink-0 border-t border-[#bbb] bg-[#d9d9d9]">
      <nav className="flex h-[22px] items-start pl-[12px] text-[12px] text-[#777]">
        <button type="button" className="h-[18px] w-[46px] rounded-b-[8px] bg-[#f5f5f5] leading-[18px] font-medium text-[#222]">模型</button>
        <button type="button" className="ml-[2px] h-[18px] w-[51px] rounded-b-[8px] bg-[#e8e8e8] leading-[18px]">布局1</button>
        <button type="button" className="ml-[3px] h-[18px] w-[51px] rounded-b-[8px] bg-[#e8e8e8] leading-[18px]">布局2</button>
        <Btn label="新建布局" className="ml-[6px] h-[18px] w-[20px] rounded-b-[8px] bg-[#e8e8e8]"><Ico w={9} h={9}><path d="M4.500 0V9M0 4.500H9" strokeWidth={1.500} /></Ico></Btn>
      </nav>
      <div className="flex justify-end gap-[2px] pr-[3px] text-[12px] text-[#333]">
        <div className={g}><button type="button" className="w-[27px] pl-[3px]">模型</button></div>
        <div className={`${g} w-[64px]`}>
          <Btn label="栅格" className="w-[24px]"><Ico><path d="M3.500 0V16M7.500 0V16M11.500 0V16M0 3.500H16M0 7.500H16M0 11.500H16" strokeWidth={1.200} /></Ico></Btn>
          <Btn label="捕捉" className="w-[23px]"><Ico w={14} h={14}><path d="M1 2H14M1 7H14M1 12H14" strokeWidth={2} strokeDasharray="2 3" /></Ico></Btn>
          <StatusCaret />
        </div>
        <div className={`${g} w-[102px] pl-px`}>
          <Btn label="正交" className={on}><Ico><path d="M1.500 0V14.500H16M1.500 9.500H6.500V14.500" stroke="#333" /></Ico></Btn>
          <Btn label="极轴追踪" className="w-[26px]"><Ico w={17} h={16}><circle cx={7} cy={8} r={6} strokeWidth={1.300} /><path d="M7 8.500H17M7 8.500L13 2" strokeWidth={1.300} /></Ico></Btn>
          <StatusCaret />
          <Btn label="等轴测草图" className="w-[20px]"><Ico><path d="M2 2L14 15" stroke="#d33" strokeWidth={1.300} /><path d="M8 0V16" stroke="#2a4" strokeWidth={1.300} /><rect x={6.500} y={7} width={3} height={3} /></Ico></Btn>
          <StatusCaret />
        </div>
        <div className={`${g} w-[64px] pl-px`}>
          <Btn label="对象捕捉追踪" className={on}><Ico><path d="M0 14.500H16M1 14L14 1.500" stroke="#333" /><path d="M6 6H9V9H6Z" fill="#333" stroke="none" /></Ico></Btn>
          <Btn label="二维对象捕捉" className="w-[25px]"><Ico><path d="M6 3.500H15.500V15.500H2.500V6" /><rect x={.500} y={.500} width={4} height={4} stroke="#e07a2a" strokeWidth={1.300} /></Ico></Btn>
          <StatusCaret />
        </div>
        <div className={`${g} w-[106px] pl-px`}>
          <Btn label="注释可见性" className={on}><Ico w={18} h={16}>{person}<circle cx={14} cy={4} r={2.500} fill="#cce4f7" /></Ico></Btn>
          <Btn label="自动缩放" className="w-[26px]"><Ico>{person}<path d="M14 0L10 5H13L11 9L16 4H13Z" fill="#555" stroke="#f5f5f5" strokeWidth={.5} /></Ico></Btn>
          <Btn label="注释比例" className="w-[22px]"><Ico>{person}</Ico></Btn>
          <button type="button" className="w-[19px] text-[12px] leading-[24px]">1:1</button>
          <StatusCaret />
        </div>
        <div className={`${g} w-[39px]`}>
          <Btn label="切换工作空间" className="w-[23px]"><Ico><circle cx={8} cy={8} r={4.500} strokeWidth={3.500} stroke="#555" /><path d="M8 0V3M8 13V16M0 8H3M13 8H16M2.500 2.500L4.500 4.500M11.500 11.500L13.500 13.500M13.500 2.500L11.500 4.500M4.500 11.500L2.500 13.500" strokeWidth={3} stroke="#555" /></Ico></Btn>
          <StatusCaret />
        </div>
        <div className={g}><Btn label="注释监视器" className="w-[24px]"><Ico><path d="M8 0V16M0 8H16" strokeWidth={2} /></Ico></Btn></div>
        <div className={g}><Btn label="隔离对象" className="w-[24px]"><Ico><rect x={.5} y={.5} width={6} height={6} /><circle cx={12.500} cy={6.500} r={3} /><path d="M6.500 10L3 15.500H10Z" /></Ico></Btn></div>
        <div className={g}>
          <Btn label="硬件加速" className="w-[24px]"><Ico><path d="M4 1H11L14 4V10H8V13H4Z" fill="#2763a8" stroke="none" /><path d="M0 3.500H6M3.500 0V6" stroke="#2763a8" /><rect x={0} y={9} width={6} height={5} fill="#f5b81e" stroke="none" /><path d="M7 11L10 14L15 9" stroke="#43b35c" strokeWidth={2.500} /></Ico></Btn>
          <Btn label="图形性能" className="w-[25px]"><Ico><path d="M7 13.500H.5V.5H14.500V7" /><path d="M1 10L5 3L8 8L11 5" stroke={BLUE} /><path d="M11.500 7L16 16H7Z" fill="#ee7d30" stroke="none" /><path d="M11.500 10V13M11.500 14V15" stroke="#fff" /></Ico></Btn>
        </div>
        <div className={g}>
          <Btn label="全屏显示" className="w-[24px]"><Ico><path d="M.5 2.500H15.500V13.500H.5ZM9.500 7.500L12.500 4.500M10 4.500H12.500V7M6.500 8.500L3.500 11.500M3.500 9V11.500H6" /></Ico></Btn>
          <Btn label="自定义状态栏" className="w-[25px]"><Ico><path d="M0 2H16M0 8H16M0 14H16" strokeWidth={2} /></Ico></Btn>
        </div>
      </div>
    </footer>
  );
}

export default function App() {
  return (
    <div className="isolate flex h-screen min-h-[600px] flex-col overflow-hidden bg-[#f5f5f5] font-['Noto_Sans','Noto_Sans_CJK_SC',sans-serif]">
      <Header />
      <div className="mr-[3px] ml-[2px] flex min-h-0 flex-1 flex-col">
        <Ribbon />
        <DocTabs />
        <TopToolbars />
        <Workspace />
        <Footer />
      </div>
    </div>
  );
}
